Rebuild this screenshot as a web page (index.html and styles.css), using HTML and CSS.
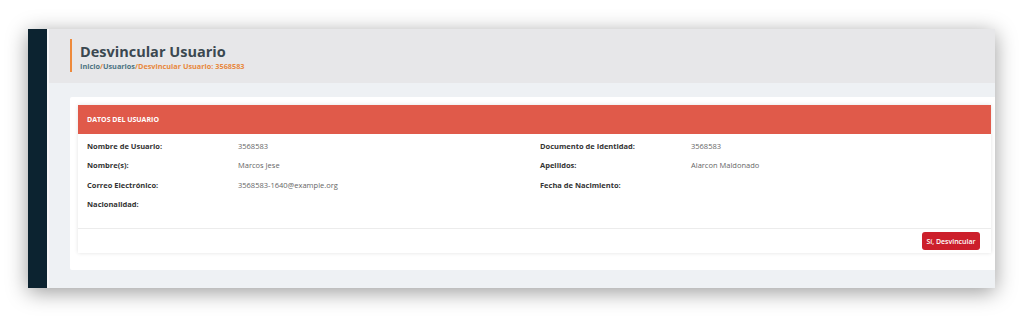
FILE: index.html
```html
<!DOCTYPE html>
<html lang="es">

<head>
    <meta charset="UTF-8">
    <meta name="viewport" content="width=device-width, initial-scale=1.0">
    <title>Desvincular Usuario</title>
    <link rel="stylesheet" href="styles.css">
</head>

<body>

    <div class="window">
        <aside class="sidebar"></aside>

        <main class="main">
            <header class="page-header">
                <div class="page-title">
                    <h1>Desvincular Usuario</h1>
                    <div class="breadcrumb">
                        <a href="#">Inicio</a>/<a href="#">Usuarios</a><span class="current">/Desvincular Usuario: 3568583</span>
                    </div>
                </div>
            </header>

            <div class="content">
                <div class="outer-card">
                    <div class="card">
                        <div class="card-header">DATOS DEL USUARIO</div>

                        <div class="card-body">
                            <div class="info-grid">
                                <span class="label">Nombre de Usuario:</span>
                                <span class="value">3568583</span>
                                <span class="label">Documento de Identidad:</span>
                                <span class="value">3568583</span>

                                <span class="label">Nombre(s):</span>
                                <span class="value">Marcos Jese</span>
                                <span class="label">Apellidos:</span>
                                <span class="value">Alarcon Maldonado</span>

                                <span class="label">Correo Electrónico:</span>
                                <span class="value">3568583-1640@example.org</span>
                                <span class="label">Fecha de Nacimiento:</span>
                                <span class="value"></span>

                                <span class="label">Nacionalidad:</span>
                                <span class="value"></span>
                            </div>
                        </div>

                        <div class="card-footer">
                            <button type="button" class="btn-danger">Sí, Desvincular</button>
                        </div>
                    </div>
                </div>
            </div>
        </main>
    </div>

</body>

</html>
```

FILE: styles.css
```css
html {
    background-color: #fff;
}

body {
    font-family: "Open Sans", Arial, sans-serif;
    background-color: #fff;
    color: #333;
    margin: 0;
    padding: 29px 0 29px 28px;
}

.window {
    display: flex;
    width: 967px;
    height: 259px;
    overflow: hidden;
    background-color: #eef1f4;
    box-shadow: 0 4px 20px rgba(0, 0, 0, 0.4);
}

.sidebar {
    width: 19px;
    flex-shrink: 0;
    background-color: #0c2330;
    border-right: 2px solid #f7f7f7;
}

.main {
    flex: 1;
    display: flex;
    flex-direction: column;
    min-width: 0;
}

.page-header {
    height: 54px;
    flex-shrink: 0;
    background-color: #e7e7e9;
    padding: 10px 0 0 21px;
    box-sizing: border-box;
}

.page-title {
    border-left: 2px solid #ee8a3c;
    padding: 3px 0 0 8px;
    height: 33px;
    box-sizing: border-box;
}

.page-title h1 {
    margin: 0;
    font-size: 14.5px;
    line-height: 19px;
    font-weight: 700;
    color: #3b4850;
}

.breadcrumb {
    font-size: 7.3px;
    line-height: 10px;
    font-weight: 700;
    color: #e8883e;
}

.breadcrumb a {
    color: #4d7382;
    text-decoration: none;
}

.breadcrumb .current {
    color: #e8883e;
}

.content {
    padding: 14px 0 0 21px;
}

.outer-card {
    background-color: #fff;
    margin-right: -4px;
    padding: 8px 8px 17px;
    border-radius: 2px;
}

.card {
    background-color: #fff;
    box-shadow: 0 0 4px rgba(0, 0, 0, 0.12);
}

.card-header {
    height: 29px;
    background-color: #e05a4a;
    color: #fff;
    font-size: 7px;
    font-weight: 700;
    line-height: 29px;
    padding-left: 9px;
}

.card-body {
    padding: 2px 9px 14px;
}

.info-grid {
    display: grid;
    grid-template-columns: 151px 302px 151px 1fr;
    grid-auto-rows: 19.5px;
    align-items: center;
    font-size: 7.5px;
}

.label {
    font-weight: 700;
    color: #333;
}

.value {
    color: #666;
}

.card-footer {
    height: 25px;
    border-top: 1px solid #ececec;
    display: flex;
    justify-content: flex-end;
    align-items: flex-start;
    padding: 3px 11px 0 0;
    box-sizing: border-box;
}

.btn-danger {
    background-color: #cc1f2b;
    color: #fff;
    border: none;
    border-radius: 3px;
    width: 58px;
    height: 18px;
    font-family: "Open Sans", Arial, sans-serif;
    font-size: 7px;
    font-weight: 600;
    padding: 0;
    cursor: pointer;
}

.btn-danger:hover {
    background-color: #b01a25;
}
```
